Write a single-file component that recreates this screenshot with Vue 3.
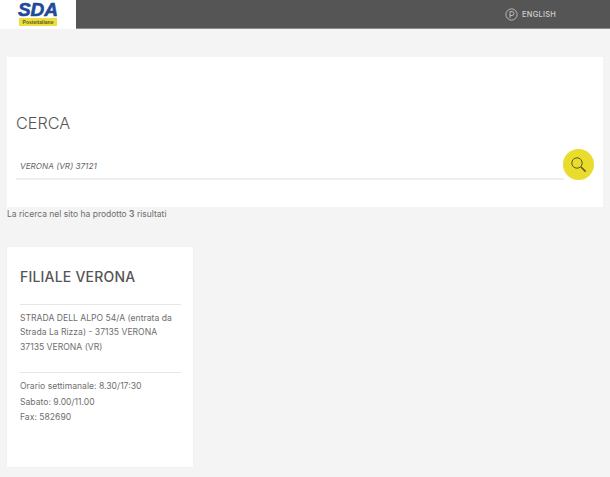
<script setup>
const hours = ['Orario settimanale: 8.30/17:30', 'Sabato: 9.00/11.00', 'Fax: 582690']
</script>

<template>
  <div class="page">
    <header class="top">
      <div class="brand">
        <span class="sda">SDA</span>
        <span class="poste">Posteitaliane</span>
      </div>
      <div class="bar">
        <a class="lang">
          <svg width="13" height="13" viewBox="0 0 13 13" fill="none" stroke="#c4c4c4" stroke-width="0.9">
            <circle cx="6.5" cy="6.5" r="5.6" />
            <path d="M5 10V3.6h2a1.9 1.9 0 0 1 0 3.9H5" />
          </svg>
          <span>ENGLISH</span>
        </a>
      </div>
    </header>

    <main class="content">
      <section class="search">
        <h1>CERCA</h1>
        <div class="field">
          <span class="query">VERONA (VR) 37121</span>
          <button class="go" type="button" aria-label="Cerca">
            <svg width="17" height="17" viewBox="0 0 17 17" fill="none" stroke="#5e5820" stroke-width="1">
              <circle cx="7" cy="7" r="5.2" />
              <path d="M10.8 10.8l4.8 4.8" stroke-width="1.5" />
            </svg>
          </button>
        </div>
      </section>

      <p class="count">La ricerca nel sito ha prodotto <b>3</b> risultati</p>

      <article class="card">
        <h2>FILIALE VERONA</h2>
        <div class="block address">
          <p class="a1">STRADA DELL ALPO 54/A (entrata da</p>
          <p class="a2">Strada La Rizza) - 37135 VERONA</p>
          <p class="a3">37135 VERONA (VR)</p>
        </div>
        <div class="block hours">
          <p v-for="h in hours" :key="h">{{ h }}</p>
        </div>
      </article>
    </main>
  </div>
</template>

<style>
html, body { margin: 0; background: #f4f4f4; }
</style>

<style scoped>
.page {
  width: 610px;
  height: 477px;
  overflow: hidden;
  background: #f4f4f4;
  font-family: "Inter", "Liberation Sans", sans-serif;
  color: #6e6e6e;
}
p, h1, h2 { margin: 0; font-weight: 400; }

.top { display: flex; height: 29px; }
.brand {
  width: 76px;
  background: #fff;
  display: flex;
  flex-direction: column;
  align-items: center;
}
.sda {
  margin-top: 2px;
  font: italic 700 19px/15px "Liberation Sans", sans-serif;
  -webkit-text-stroke: 0.6px #1f4a9a;
  color: #1f4a9a;
}
.poste {
  width: 38px;
  height: 8px;
  margin-top: 1px;
  background: #ecdf3c;
  color: #5a5a2a;
  font: 700 5px/8px "Liberation Sans", sans-serif;
  text-align: center;
}
.bar {
  flex: 1;
  background: #555;
  border-bottom: 1px solid #8a8a8a;
  display: flex;
  align-items: center;
  padding-left: 429px;
}
.lang { display: flex; align-items: center; gap: 4px; color: #d2d2d2; font-size: 7.4px; letter-spacing: 0.3px; font-weight: 500; }

.content { padding: 28px 7px 0; }
.search {
  background: #fff;
  height: 150px;
  box-sizing: border-box;
  padding: 56px 9px 0;
}
h1 { font-size: 16.2px; line-height: 20px; font-weight: 300; color: #555; }
.field {
  position: relative;
  margin-top: 23px;
  height: 15px;
  padding: 0 0 7px 4px;
  border-bottom: 2px solid #eee;
  width: 544px;
  line-height: 15px;
}
.query { font-size: 8.2px; font-style: italic; color: #666; }
.go {
  position: absolute;
  right: -30px;
  top: -7px;
  width: 31px;
  height: 31px;
  padding: 0;
  border: 0;
  border-radius: 50%;
  background: #e9dc2c;
  display: flex;
  align-items: center;
  justify-content: center;
}
.count { font-size: 8.5px; line-height: 14px; color: #6e6e6e; }
.count b { font-weight: 600; }

.card {
  width: 186px;
  height: 220px;
  box-sizing: border-box;
  margin-top: 26px;
  background: #fff;
  box-shadow: 0 0 2px rgba(0, 0, 0, 0.05);
  padding: 21px 12px 0 13px;
}
h2 { font-size: 14px; line-height: 18px; font-weight: 500; color: #555; letter-spacing: 0.2px; }
.block { font-size: 8.6px; color: #6e6e6e; border-top: 1px solid #e6e6e6; }
.address { margin-top: 18px; padding-top: 6px; height: 61px; }
.address p { line-height: 14px; }
.a3 { margin-top: 1px; }
.hours { padding-top: 6px; }
.hours p { line-height: 15.5px; }
</style>
